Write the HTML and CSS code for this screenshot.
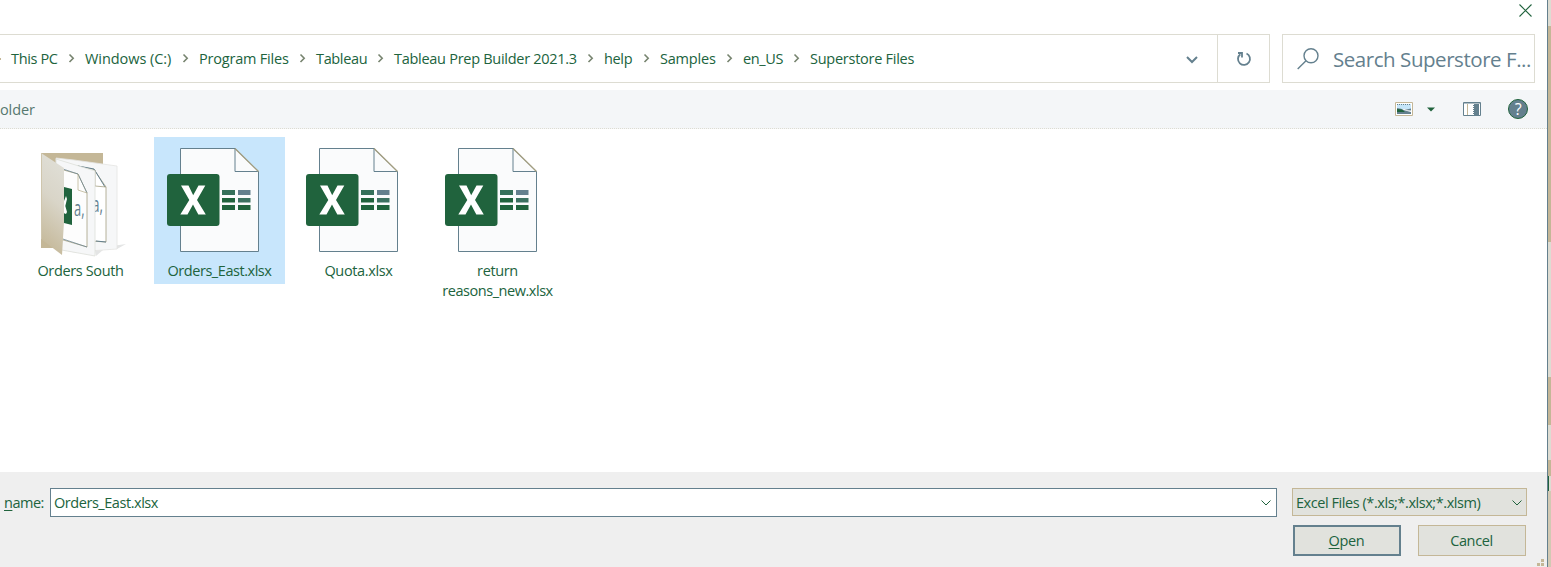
FILE: index.html
```html
<!DOCTYPE html>
<html lang="en">
<head>
<meta charset="utf-8">
<title>Open</title>
<link rel="stylesheet" href="styles.css">
</head>
<body>
<svg class="defs" width="0" height="0" aria-hidden="true">
  <linearGradient id="flap" x1="0.600" y1="0" x2="0.400" y2="1"><stop offset="0" stop-color="#e0dfd7"/><stop offset=".45" stop-color="#d9d5c8"/><stop offset="1" stop-color="#c4b797"/></linearGradient>
  <symbol id="sep" viewBox="0 0 27 16"><path d="M11.500 3.500L15.200 7.200L11.500 11" fill="none" stroke="#77846f" stroke-width="1.600"/></symbol>
  <symbol id="excel" viewBox="0 0 92 106">
    <path d="M13.500 1.500H68L91.500 24.500V104.500H13.500Z" fill="#fafbfc" stroke="#64808e"/>
    <path d="M68 1.500V24.500H91.500" fill="none" stroke="#64808e"/>
    <path d="M68 1.500L91.500 24.500" stroke="#a49f82" stroke-width="1.300"/>
    <rect x="0" y="27" width="52.500" height="52" rx="3" fill="#20633d"/>
    <path d="M14 38.500H21.500L26.200 48.200L31.500 38.500H38.300L30 53L38.800 67.500H31.300L26 57.500L20.500 67.500H13.300L22.300 53Z" fill="#fff"/>
    <path d="M55 43h13v5H55z" fill="#35705a"/><path d="M71 43h12.500v5H71z" fill="#64808e"/>
    <path d="M55 51h13v4.500H55zM55 58h13v5H55zM71 58h12.500v5H71z" fill="#20633d"/><path d="M71 51h12.500v4.500H71z" fill="#3c7161"/>
  </symbol>
</svg>
<div class="screen">
  <main class="dialog">
    <header class="titlebar">
      <svg class="close" width="13" height="13" viewBox="0 0 13 13"><path d="M.5 .5L12.500 12.500M12.500 .5L.5 12.500" stroke="#20633d" stroke-width="1.100"/></svg>
    </header>
    <nav class="navrow">
      <div class="address">
        <div class="crumbs">
          <i class="clip"></i>
          <span class="c1">This PC</span><svg class="sep"><use href="#sep"/></svg>
          <span class="c2">Windows (C:)</span><svg class="sep"><use href="#sep"/></svg>
          <span class="c3">Program Files</span><svg class="sep"><use href="#sep"/></svg>
          <span class="c4">Tableau</span><svg class="sep"><use href="#sep"/></svg>
          <span class="c5">Tableau Prep Builder 2021.3</span><svg class="sep"><use href="#sep"/></svg>
          <span class="c6">help</span><svg class="sep"><use href="#sep"/></svg>
          <span class="c7">Samples</span><svg class="sep"><use href="#sep"/></svg>
          <span class="c8">en_US</span><svg class="sep"><use href="#sep"/></svg>
          <span class="c9">Superstore Files</span>
        </div>
        <div class="history"><svg width="12" height="8" viewBox="0 0 12 8"><path d="M1 1L6 6L11 1" fill="none" stroke="#64808e" stroke-width="2"/></svg></div>
        <div class="refresh"><svg width="16" height="16" viewBox="0 0 16 16"><path d="M10.500 2.500A6 6 0 1 1 4.300 3.200M2 2H6V6.500" fill="none" stroke="#64808e" stroke-width="1.800"/></svg></div>
      </div>
      <div class="search">
        <svg width="22" height="22" viewBox="0 0 22 22"><circle cx="14" cy="7.700" r="7" fill="none" stroke="#64808e" stroke-width="1.400"/><path d="M9 12.700L.7 21" stroke="#64808e" stroke-width="1.400"/></svg>
        <span>Search Superstore F...</span>
      </div>
    </nav>
    <div class="toolbar">
      <span class="folder-label">older</span>
      <div class="tools">
        <svg class="view" width="18" height="14" viewBox="0 0 18 14"><path d="M.5 .5h17v13H.5z" fill="#fff" stroke="#c4b797"/><path d="M2 2h14v5H2z" fill="#c5e5f8"/><path d="M2 2.500h14" stroke="#64808e" stroke-dasharray="1 1"/><path d="M2 6Q6 6 10 8.500L16 10V12H2Z" fill="#64808e"/><path d="M2 7L7 7.500L10 10H2Z" fill="#20633d"/><path d="M9 8L16 6.500V8.500Z" fill="#64808e"/></svg>
        <svg class="drop" width="8" height="5" viewBox="0 0 8 5"><path d="M0 .5H8L4 4.500Z" fill="#20633d"/></svg>
        <svg class="pane" width="18" height="14" viewBox="0 0 18 14"><path d="M.5 .5h17v13H.5z" fill="#fff" stroke="#64808e"/><path d="M1 1H17" stroke="#64808e"/><path d="M4.500 2v11" stroke="#c4b797"/><path d="M11 2h5v11h-5z" fill="#64808e"/><path d="M10.500 3v10" stroke="#64808e" stroke-dasharray="1 1"/></svg>
        <span class="help">?</span>
      </div>
    </div>
    <section class="files">
      <div class="file">
        <svg class="folder" width="92" height="106" viewBox="28 147 92 106">
            <path d="M41 153H103V248H41Z" fill="#c4b797"/>
            <path d="M112 246L126 244L117 249Z" fill="#e4e5e5"/>
            <path d="M95 250L103 250L96 256Z" fill="#e4e5e5"/>
            <path d="M56 158L74 160L117 166V249L74 252L62 249Z" fill="#f6f7f8" stroke="#e4e5e2" stroke-width=".8"/>
            <path d="M77 166L94 169.500L106 187V242L77 240Z" fill="#fff" stroke="#a49f82" stroke-width=".8"/>
            <path d="M78 166L94 169L105 187M96 241L106 242" fill="none" stroke="#64808e"/><path d="M95 170V186L106 187" fill="none" stroke="#a49f82" stroke-width=".8"/>
            <text x="92" y="212" class="glyph" textLength="11" lengthAdjust="spacingAndGlyphs">a,</text>
            <path d="M56 159L95 171V256L56 249Z" fill="#f6f7f8" stroke="#dddfd9" stroke-width=".8"/>
            <path d="M60 169L78 174L87 193V247L60 239Z" fill="#fdfdfd" stroke="#a49f82" stroke-width=".8"/>
            <path d="M60 168L78 174L87 193M63 239L87 247" fill="none" stroke="#64808e" stroke-width=".7"/><path d="M78 174V190L87 193" fill="none" stroke="#bdb596" stroke-width=".8"/>
            <path d="M60 186L72 189V225L60 222Z" fill="#20633d"/><path d="M61 195L64 201L66 196L67 199L65.300 206L67 212L66 214L61 212Z" fill="#fff"/>
            <text x="74" y="216" class="glyph" textLength="10.500" lengthAdjust="spacingAndGlyphs">a,</text>
            <path d="M41 153L64 168V222L62 255L41 239Z" fill="url(#flap)"/>
            <path d="M41.500 153V239" stroke="#cfc6ad"/>
        </svg>
        <span class="n1">Orders South</span>
      </div>
      <div class="file selected"><svg width="92" height="106"><use href="#excel"/></svg><span class="n2">Orders_East.xlsx</span></div>
      <div class="file"><svg width="92" height="106"><use href="#excel"/></svg><span class="n3">Quota.xlsx</span></div>
      <div class="file"><svg width="92" height="106"><use href="#excel"/></svg><span class="n4">return</span><span class="n5">reasons_new.xlsx</span></div>
    </section>
    <footer class="footer">
      <label class="name-label"><u>n</u>ame:</label>
      <div class="filename"><span>Orders_East.xlsx</span><svg width="10" height="6" viewBox="0 0 10 6"><path d="M.5 .5L5 5L9.500 .5" fill="none" stroke="#20633d"/></svg></div>
      <div class="actions">
        <div class="filter"><span>Excel Files (*.xls;*.xlsx;*.xlsm)</span><svg width="10" height="6" viewBox="0 0 10 6"><path d="M.5 .5L5 5L9.500 .5" fill="none" stroke="#20633d"/></svg></div>
        <div class="buttons"><button class="open"><span><u>O</u>pen</span></button><button><span>Cancel</span></button></div>
      </div>
      <svg class="grip" width="7" height="7" viewBox="0 0 7 7"><path d="M4 0h3v3H4zM0 4h3v3H0zM4 4h3v3H4z" fill="#c4b797"/></svg>
    </footer>
  </main>
  <aside class="backdrop"><i class="b1"></i><i class="b2"></i><i class="b3"></i><i class="b4"></i><i class="b5"></i><i class="b6"></i><i class="b7"></i><i class="b8"></i></aside>
</div>
</body>
</html>
```
FILE: styles.css
```css
* { box-sizing: border-box; }
body { margin: 0; overflow: hidden; background: #fff; color: #20633d; font: 14.5px/20px "Open Sans", "Noto Sans", sans-serif; letter-spacing: -.35px; }
svg { display: block; flex: none; }
span, label { white-space: nowrap; }
u { text-underline-offset: 2px; }
.defs { position: absolute; }
.screen { display: flex; width: 1551px; height: 567px; }
.dialog { width: 1548px; height: 567px; display: flex; flex-direction: column; border-right: 1px solid #64808e; }
.titlebar { height: 34px; display: flex; justify-content: flex-end; padding: 4px 15px 0 0; }
.navrow { height: 56px; display: flex; gap: 12px; }
.address { width: 1270px; height: 49px; display: flex; border: solid #dddcd2; border-width: 1px 1px 1px 0; }
.crumbs { flex: 1; display: flex; align-items: center; }
.crumbs span { flex: none; }
.clip { width: 1px; height: 2px; margin-right: 10px; background: #c4b797; }
.sep { width: 27px; height: 16px; }
.c1 { width: 47px; } .c2 { width: 87px; letter-spacing: -.05px; } .c3 { width: 90px; letter-spacing: -.2px; }
.c4 { width: 51px; } .c5 { width: 183px; letter-spacing: -.28px; } .c6 { width: 29px; }
.c7 { width: 56px; letter-spacing: -.2px; } .c8 { width: 40px; } .c9 { width: 104px; letter-spacing: -.26px; }
.history { width: 31px; display: flex; align-items: center; padding-top: 3px; }
.refresh { width: 52px; display: flex; align-items: center; justify-content: center; border-left: 1px solid #dddcd2; }
.search { width: 253px; height: 49px; display: flex; align-items: center; border: 1px solid #dddcd2; padding-left: 14px; gap: 14px; color: #64808e; font-size: 20.5px; letter-spacing: -.45px; }
.search span { padding-top: 1px; }
.toolbar { height: 39px; display: flex; justify-content: space-between; align-items: center; background: #f4f6f8; border-bottom: 1px dotted #dddcd2; color: #56786f; }
.folder-label { padding-top: 2px; letter-spacing: -.1px; }
.tools { display: flex; align-items: center; padding-right: 19px; }
.drop { margin: 0 28px 0 14px; }
.pane { margin-right: 27px; }
.help { width: 20px; height: 20px; border-radius: 50%; border: 1px solid #20633d; background: #64808e; color: #fff; font-size: 16px; font-weight: 500; line-height: 18px; text-align: center; }
.files { height: 343px; display: flex; align-items: flex-start; gap: 8px; padding: 8px 0 0 15px; }
.file { width: 131px; height: 147px; padding-top: 10px; display: flex; flex-direction: column; align-items: center; }
.file svg { margin: 0 14px 8px 0; }
.folder { overflow: visible; }
.n2, .n5 { letter-spacing: -.45px; }
.selected { background: #c8e6fc; }
.glyph { font: 22px "Open Sans", sans-serif; fill: #64808e; letter-spacing: 0; }
.footer { position: relative; height: 95px; display: flex; align-items: flex-start; padding-top: 16px; background: #efefef; }
.name-label { width: 50px; padding: 5px 0 0 4px; letter-spacing: -.5px; }
.filename { width: 1227px; height: 29px; display: flex; align-items: center; justify-content: space-between; border: 1px solid #64808e; background: #fff; padding: 0 5px 0 3px; letter-spacing: -.45px; }
.actions { margin-left: 15px; }
.filter { width: 235px; height: 28px; display: flex; align-items: center; justify-content: space-between; border: 1px solid #c4b797; background: #e1e2dd; padding: 2px 4px 0 3px; letter-spacing: -.44px; }
.buttons { display: flex; gap: 17px; padding: 9px 0 0 1px; }
button { width: 108px; height: 31px; padding: 0 1px 0 0; border: 1px solid #c4b797; background: #e1e2dd; color: inherit; font: inherit; letter-spacing: inherit; }
.open { border: 2px solid #64808e; }
.grip { position: absolute; right: 3px; bottom: 1px; }
.backdrop { width: 3px; display: flex; flex-direction: column; background: #dddcd2; }
.backdrop i { display: block; background: #c4b797; }
.backdrop .b1 { height: 26px; background: #dddcd2; }
.b2 { height: 216px; }
.backdrop .b3 { height: 135px; background: #dddcd2; }
.b4 { height: 48px; }
.backdrop .b5 { height: 35px; background: #dddcd2; }
.b6 { height: 16px; }
.backdrop .b7 { height: 15px; width: 1px; background: #20633d; }
.backdrop .b8 { flex: 1; background: #d2c9b3; }
```
